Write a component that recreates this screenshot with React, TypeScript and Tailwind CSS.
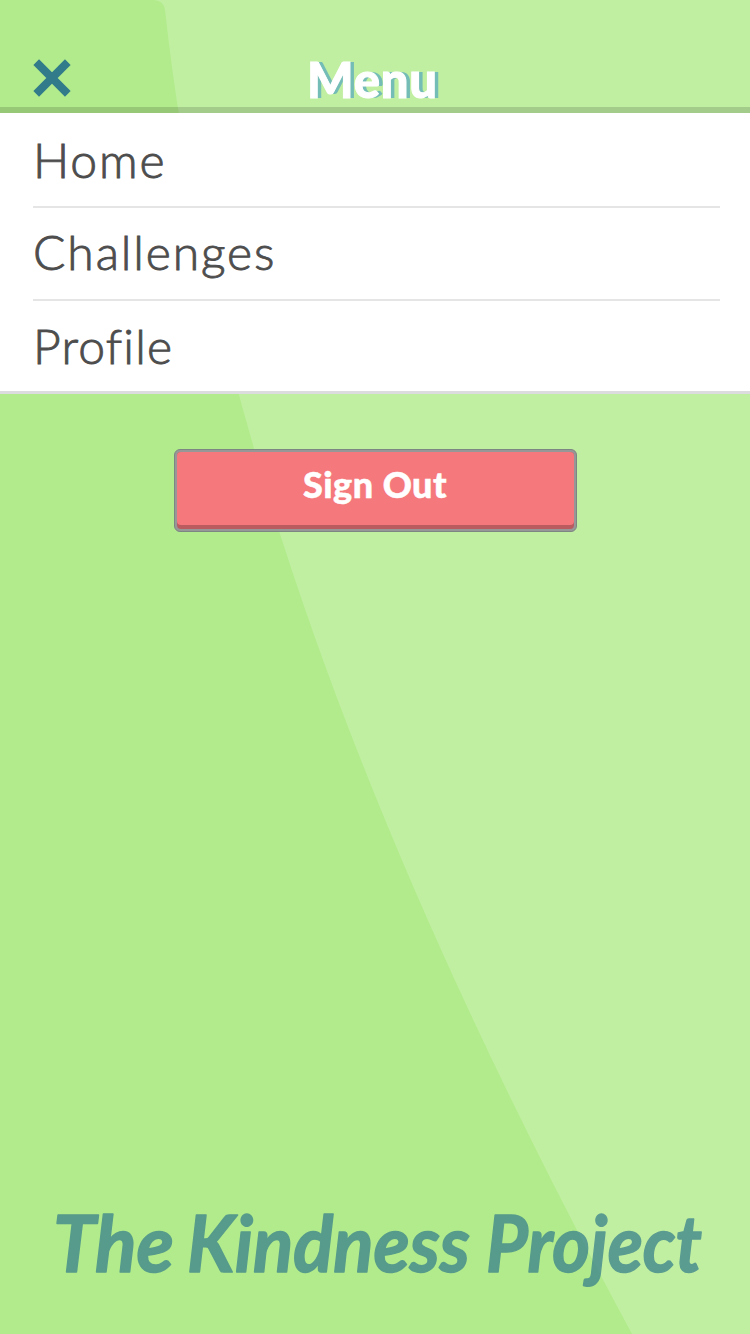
const items = [
  { label: "Home", tracking: "tracking-[1.9px]" },
  { label: "Challenges", tracking: "tracking-[1.9px]" },
  { label: "Profile", tracking: "tracking-[1.2px]" },
];

function Backdrop() {
  return (
    <svg className="absolute inset-0 -z-10 h-full w-full" viewBox="0 0 750 1334" aria-hidden="true">
      <rect width="750" height="1334" fill="#c0efa1" />
      <path d="M0 0H154Q164 1 165 10C213.5 451 394 893 632 1334H0Z" fill="#b1eb8b" />
    </svg>
  );
}

export default function App() {
  return (
    <main className="relative isolate flex h-[1334px] w-[750px] flex-col overflow-hidden font-['Lato',sans-serif]">
      <Backdrop />
      <header className="grid h-[113px] shrink-0 grid-cols-[1fr_auto_1fr] border-b-[6px] border-black/15">
        <button aria-label="Close" className="ml-[33px] mt-[59px] h-[38px] w-[38px]">
          <svg viewBox="0 0 38 38" className="h-full w-full">
            <path d="M3.2 3.2 34.8 34.8M34.8 3.2 3.2 34.8" stroke="#327b8b" strokeWidth="8" />
          </svg>
        </button>
        <h1 className="mt-[54px] mr-[5px] h-[52px] text-[49px] leading-[50px] font-black tracking-[0.8px] text-white [-webkit-text-stroke:1px_white] [text-shadow:4px_0_0_#74bcb6]">
          Menu
        </h1>
        <span />
      </header>

      <nav className="h-[281px] shrink-0 border-b-[3px] border-[#dcdcdf] bg-white pl-[33px] pr-[30px]">
        {items.map(({ label, tracking }) => (
          <a
            key={label}
            className={`flex h-[93px] items-center border-b-2 border-[#e5e5e5] pb-1 text-[48px] leading-none font-light text-[#4d4d4d] [-webkit-text-stroke:0.9px_#4d4d4d] first:h-[95px] first:pb-0 last:border-b-0 ${tracking}`}
          >
            {label}
          </a>
        ))}
      </nav>

      <button className="mx-auto mt-[55px] flex h-[83px] w-[403px] shrink-0 rounded-[6px] border border-[#7e8683] bg-[#979797] p-0.5">
        <span className="flex h-full w-full rounded-[4px] bg-[#ba5b60] pb-1">
          <span className="flex h-full w-full items-center justify-center rounded-[4px] bg-[#f5787c] pb-[9px] text-[36px] font-black tracking-[0.5px] text-white [-webkit-text-stroke:0.5px_white]">
            Sign Out
          </span>
        </span>
      </button>

      <footer className="mt-auto h-[144px] shrink-0 opacity-[0.71]">
        <svg
          viewBox="0 0 750 144"
          className="h-full w-full font-['Lato',sans-serif] text-[78px] font-bold italic"
          fill="#327b8b"
          stroke="#327b8b"
          strokeWidth="1.5"
          strokeLinejoin="round"
        >
          <text x="53" y="82" textLength="121" lengthAdjust="spacingAndGlyphs">The</text>
          <text x="187" y="82" textLength="283" lengthAdjust="spacingAndGlyphs">Kindness</text>
          <text x="486" y="82" textLength="216" lengthAdjust="spacingAndGlyphs">Project</text>
        </svg>
      </footer>
    </main>
  );
}
